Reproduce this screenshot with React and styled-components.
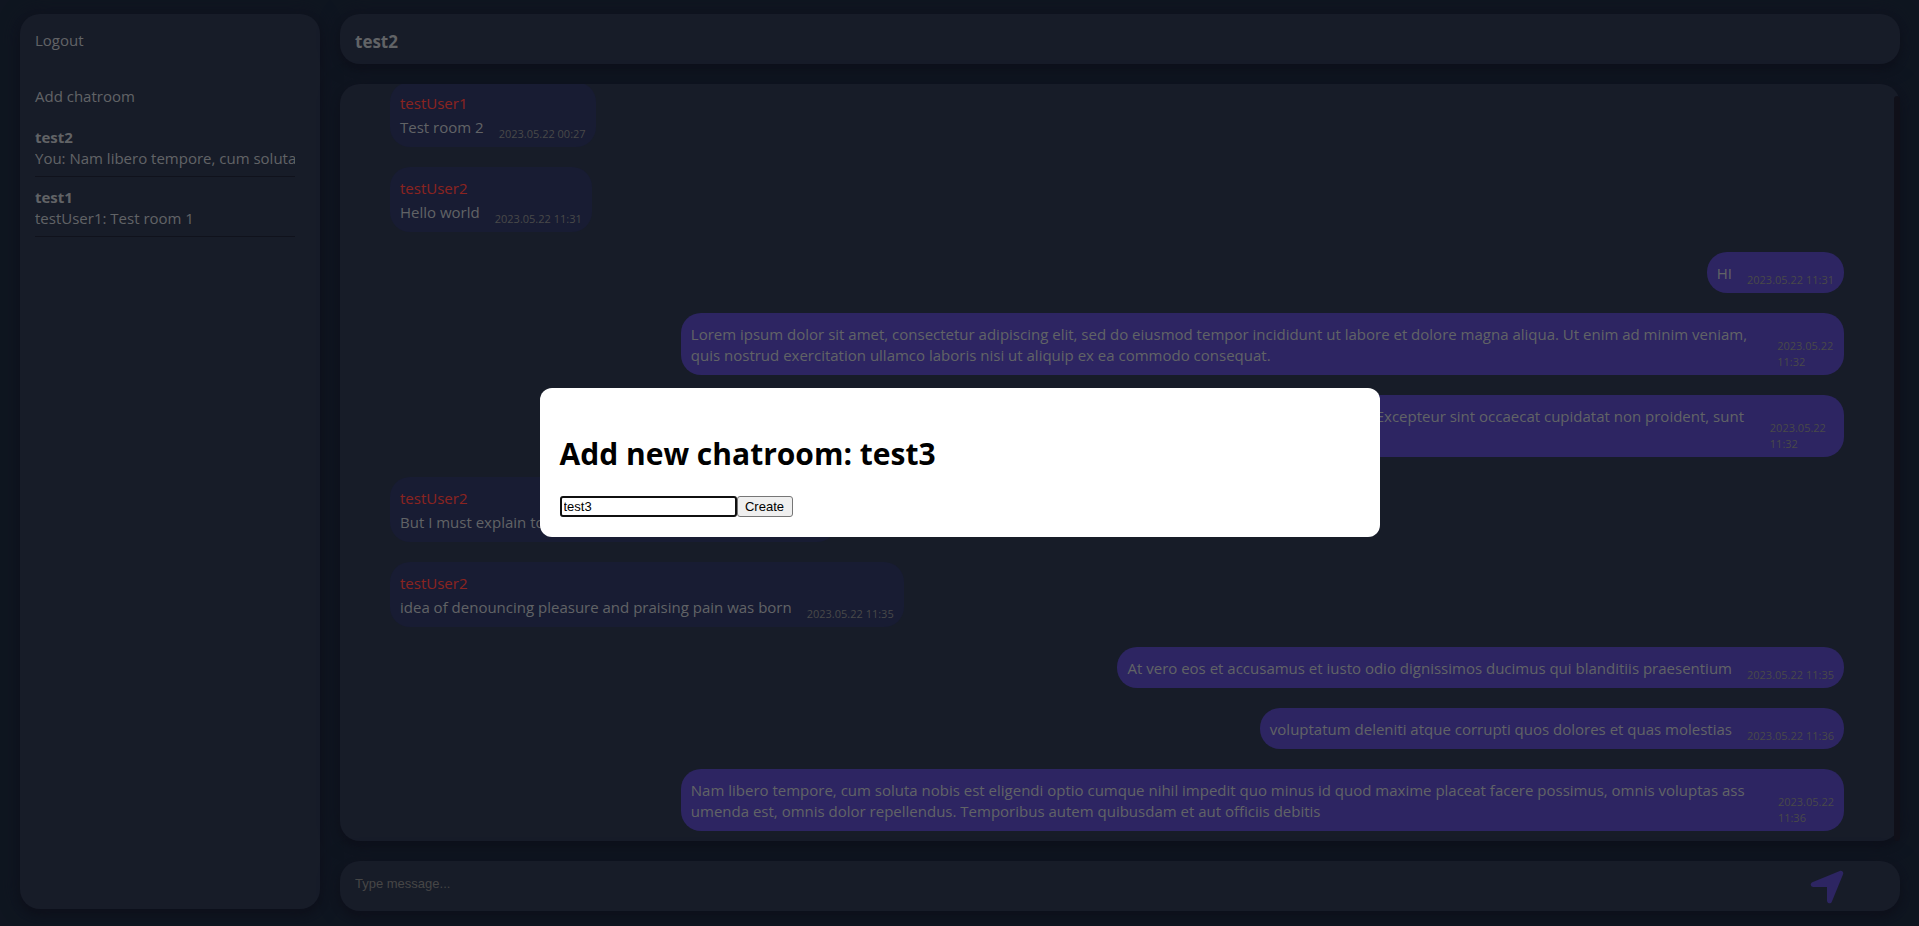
import React, { useState } from 'react';
import styled, { createGlobalStyle, css } from 'styled-components';
import { FaLocationArrow } from 'react-icons/fa6';

const GlobalStyle = createGlobalStyle`
  * { box-sizing: border-box; }
  body {
    margin: 0;
    color: #a2a5aa;
    background: #192436;
    font: 15px/21px "Segoe UI", "Open Sans", sans-serif;
  }
`;

const surface = css`
  background: #272f44;
  border-radius: 20px;
  box-shadow: 0 0 20px #1b1f33, 0 5px 10px rgba(10, 8, 20, 0.4);
`;

const Page = styled.div`
  display: flex;
  gap: 20px;
  height: 100vh;
  padding: 14px 19px 15px 20px;
`;

const Sidebar = styled.aside`
  ${surface}
  flex: 0 0 300px;
  min-width: 0;
  display: flex;
  flex-direction: column;
  align-items: flex-start;
  margin-bottom: 2px;
  padding: 16px 25px 15px 15px;
`;

const TextButton = styled.button`
  margin: 0 0 35px;
  padding: 0;
  border: 0;
  background: none;
  color: inherit;
  font: inherit;
  cursor: pointer;
`;

const RoomList = styled.ul`
  list-style: none;
  width: 100%;
  margin: -25px 0 0;
  padding: 0;
`;

const Room = styled.li`
  height: 60px;
  padding-top: 10px;
  border-bottom: 1px solid #1c1e30;
  overflow: hidden;
  white-space: nowrap;
`;

const RoomName = styled.strong`
  display: block;
`;

const Main = styled.main`
  flex: 1;
  min-width: 0;
  display: flex;
  flex-direction: column;
  gap: 20px;
`;

const Header = styled.header`
  ${surface}
  flex: 0 0 50px;
  padding: 16px 15px 0;
`;

const RoomTitle = styled.h3`
  margin: 0;
  font-size: 17px;
  line-height: 24px;
`;

const MessagesPanel = styled.section`
  ${surface}
  flex: 1;
  min-height: 0;
  display: flex;
`;

const Messages = styled.div`
  flex: 1;
  min-width: 0;
  display: flex;
  flex-direction: column-reverse;
  gap: 20px;
  padding: 10px 50px;
  border-radius: 20px 0 0 20px;
  overflow-y: auto;
  scrollbar-width: none;
`;

const ScrollThumb = styled.div`
  flex: 0 0 6px;
  margin-top: 12px;
  border-radius: 3px;
  background: #1b1c2b;
`;

const Bubble = styled.article`
  flex: none;
  align-self: ${(p) => (p.$own ? 'flex-end' : 'flex-start')};
  max-width: 80%;
  padding: 11px 10px 9px;
  border-radius: 20px;
  background: ${(p) => (p.$own ? '#4b3ea3' : '#282f55')};
`;

const Author = styled.div`
  margin-bottom: 3px;
  color: #e63c36;
`;

const Body = styled.div`
  display: flex;
  gap: 15px;
`;

const Text = styled.p`
  margin: 0;
`;

const Time = styled.time`
  align-self: flex-end;
  margin-bottom: -4px;
  color: #7a7a7a;
  font-size: 11px;
  line-height: 16px;
`;

const Composer = styled.form`
  ${surface}
  flex: 0 0 50px;
  display: flex;
  align-items: center;
  gap: 20px;
  padding: 2px 53px 0 15px;
`;

const MessageInput = styled.textarea`
  flex: 1;
  height: 20px;
  margin-bottom: 6px;
  padding: 0;
  border: 0;
  outline: 0;
  resize: none;
  background: none;
  color: inherit;
  font: 13px/20px "Liberation Sans", sans-serif;
  overflow: hidden;

  &::placeholder { color: #757575; }
`;

const SendButton = styled.button`
  display: flex;
  padding: 0;
  border: 0;
  background: none;
  color: #4b3ea3;
  cursor: pointer;
`;

const Overlay = styled.div`
  position: fixed;
  inset: 0;
  display: flex;
  align-items: center;
  justify-content: center;
  padding-bottom: 2px;
  background: rgba(0, 0, 0, 0.4);
`;

const Dialog = styled.div`
  width: 840px;
  max-width: 90%;
  padding: 20px;
  border-radius: 12px;
  background: #ffffff;
  color: #000000;
`;

const DialogTitle = styled.h1`
  margin: 24px 0 20px;
  font-size: 30px;
  line-height: 44px;
`;

const DialogForm = styled.form`
  display: flex;
`;

const NameInput = styled.input`
  width: 177px;
  height: 21px;
  padding: 1px 2px;
  border: 2px solid #767676;
  border-radius: 3px;
  outline: 0;
  background: #ffffff;
  color: #000000;
  font: 13px "Liberation Sans", sans-serif;

  &:focus { border-color: #101010; }
`;

const CreateButton = styled.button`
  width: 56px;
  height: 21px;
  padding: 0;
  border: 1px solid #767676;
  border-radius: 3px;
  background: #efefef;
  color: #000000;
  font: 13px "Liberation Sans", sans-serif;
`;

const rooms = [
  { name: 'test2', last: 'You: Nam libero tempore, cum soluta nobis est' },
  { name: 'test1', last: 'testUser1: Test room 1' },
];

const messages = [
  { author: 'testUser1', text: 'Test room 2', time: '2023.05.22 00:27' },
  { author: 'testUser2', text: 'Hello world', time: '2023.05.22 11:31' },
  { text: 'HI', time: '2023.05.22 11:31' },
  {
    text: 'Lorem ipsum dolor sit amet, consectetur adipiscing elit, sed do eiusmod tempor incididunt ut labore et dolore magna aliqua. Ut enim ad minim veniam, quis nostrud exercitation ullamco laboris nisi ut aliquip ex ea commodo consequat.',
    time: '2023.05.22 11:32',
  },
  {
    text: 'Duis aute irure dolor in reprehenderit in voluptate velit esse cillum dolore eu fugiat nulla pariatur. Excepteur sint occaecat cupidatat non proident, sunt in culpa qui officia deserunt mollit anim id est laborum.',
    time: '2023.05.22 11:32',
  },
  {
    author: 'testUser2',
    text: 'But I must explain to you how all this mistaken',
    time: '2023.05.22 11:35',
  },
  {
    author: 'testUser2',
    text: 'idea of denouncing pleasure and praising pain was born',
    time: '2023.05.22 11:35',
  },
  {
    text: 'At vero eos et accusamus et iusto odio dignissimos ducimus qui blanditiis praesentium',
    time: '2023.05.22 11:35',
  },
  {
    text: 'voluptatum deleniti atque corrupti quos dolores et quas molestias',
    time: '2023.05.22 11:36',
  },
  {
    text: 'Nam libero tempore, cum soluta nobis est eligendi optio cumque nihil impedit quo minus id quod maxime placeat facere possimus, omnis voluptas ass umenda est, omnis dolor repellendus. Temporibus autem quibusdam et aut officiis debitis',
    time: '2023.05.22 11:36',
  },
];

function Message({ author, text, time }) {
  return (
    <Bubble $own={!author}>
      {author && <Author>{author}</Author>}
      <Body>
        <Text>{text}</Text>
        <Time>{time}</Time>
      </Body>
    </Bubble>
  );
}

export default function App() {
  const [name, setName] = useState('test3');
  const stop = (e) => e.preventDefault();

  return (
    <>
      <GlobalStyle />
      <Page>
        <Sidebar>
          <TextButton type="button">Logout</TextButton>
          <TextButton type="button">Add chatroom</TextButton>
          <RoomList>
            {rooms.map((room) => (
              <Room key={room.name}>
                <RoomName>{room.name}</RoomName>
                {room.last}
              </Room>
            ))}
          </RoomList>
        </Sidebar>
        <Main>
          <Header>
            <RoomTitle>test2</RoomTitle>
          </Header>
          <MessagesPanel>
            <Messages>
              {[...messages].reverse().map((m) => (
                <Message key={m.text} {...m} />
              ))}
            </Messages>
            <ScrollThumb />
          </MessagesPanel>
          <Composer onSubmit={stop}>
            <MessageInput aria-label="Message" placeholder="Type message..." />
            <SendButton aria-label="Send">
              <FaLocationArrow size={40} />
            </SendButton>
          </Composer>
        </Main>
      </Page>
      <Overlay>
        <Dialog role="dialog" aria-modal="true" aria-labelledby="dialog-title">
          <DialogTitle id="dialog-title">Add new chatroom: {name}</DialogTitle>
          <DialogForm onSubmit={stop}>
            <NameInput
              aria-label="Chatroom name"
              autoFocus
              value={name}
              onChange={(e) => setName(e.target.value)}
            />
            <CreateButton>Create</CreateButton>
          </DialogForm>
        </Dialog>
      </Overlay>
    </>
  );
}
